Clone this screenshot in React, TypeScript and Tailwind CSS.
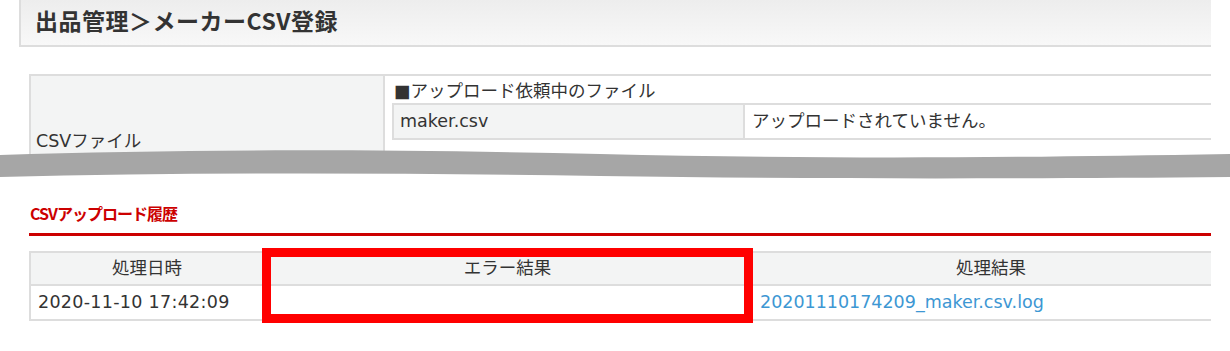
import React from "react";

const font = {
  fontFamily: '"DejaVu Sans", "Noto Sans CJK JP", sans-serif',
};

export default function App() {
  return (
    <div
      className="relative w-[1230px] h-[351px] bg-white overflow-hidden text-[#333333] text-[17.5px]"
      style={font}
    >
      {/* upper screenshot */}
      <div className="h-[160px] overflow-hidden">
        <div className="ml-[19px] w-[1192px] h-[47px] border-l-2 border-b-2 border-[#dddddd] bg-gradient-to-b from-[#ededed] to-[#f8f8f8] flex items-center pl-[14px] pb-[5px]">
          <h1
            className="text-[23px] font-bold text-[#333333] leading-none tracking-[0.5px]"
            style={{ fontFamily: '"Noto Sans CJK JP", sans-serif' }}
          >
            出品管理＞メーカーCSV登録
          </h1>
        </div>

        <div className="ml-[29px] mt-[27px] w-[1182px] flex border-t-2 border-l-2 border-[#dddddd]">
          <div className="w-[354px] shrink-0 h-[140px] bg-[#f3f4f4] border-r-2 border-[#dddddd] pl-[5px] pt-[52px] leading-[26px]">
            CSVファイル
          </div>
          <div className="flex-1 pl-[7px]">
            <div className="h-[27px] pt-[3px] leading-[24px] pl-[2px]">■アップロード依頼中のファイル</div>
            <div className="flex h-[37px] border-t-2 border-b-2 border-l-2 border-[#dddddd]">
              <div className="w-[351px] shrink-0 bg-[#f3f4f4] border-r-2 border-[#dddddd] pl-[6px] flex items-center">
                maker.csv
              </div>
              <div className="flex-1 pl-[7px] flex items-center">アップロードされていません。</div>
            </div>
          </div>
        </div>
      </div>

      {/* cut band */}
      <svg
        className="absolute left-0 top-[145px]"
        width="1230"
        height="40"
        viewBox="0 145 1230 40"
      >
        <path
          d="M0,155 C180,149 380,149 600,154 S1000,158 1230,154 L1230,177 C1000,179 800,179 600,176 S200,172 0,177 Z"
          fill="#a6a6a6"
        />
      </svg>

      {/* lower screenshot */}
      <div className="pt-[41px]">
        <div className="ml-[29px] w-[1182px] h-[35px] border-b-[3px] border-[#cc0000]">
          <h2
            className="text-[16px] font-bold text-[#cc0000] leading-[24px] pl-[1px] tracking-[-1px]"
            style={{ fontFamily: '"Noto Sans CJK JP", sans-serif' }}
          >
            CSVアップロード履歴
          </h2>
        </div>

        <div className="ml-[29px] mt-[15px] w-[1182px] overflow-hidden">
          <div className="w-[1201px] border-t-2 border-l-2 border-[#dddddd]">
            <div className="flex h-[33px] bg-[#f3f4f4] border-b-2 border-[#dddddd]">
              <div className="w-[234px] shrink-0 border-r-2 border-[#dddddd] flex items-center justify-center">
                処理日時
              </div>
              <div className="w-[487px] shrink-0 border-r-2 border-[#dddddd] flex items-center justify-center">
                エラー結果
              </div>
              <div className="flex-1 flex items-center justify-center">処理結果</div>
            </div>
            <div className="flex h-[35px] border-b-2 border-[#dddddd]">
              <div className="w-[234px] shrink-0 border-r-2 border-[#dddddd] flex items-center pl-[7px] tracking-[0.3px]">
                2020-11-10 17:42:09
              </div>
              <div className="w-[487px] shrink-0 border-r-2 border-[#dddddd]" />
              <div className="flex-1 flex items-center pl-[8px]">
                <a href="#" className="text-[#3d97d3]">
                  20201110174209_maker.csv.log
                </a>
              </div>
            </div>
          </div>
        </div>
      </div>

      {/* highlight box */}
      <div className="absolute left-[262px] top-[248px] w-[491px] h-[75px] border-[9px] border-[#ff0000]" />
    </div>
  );
}
